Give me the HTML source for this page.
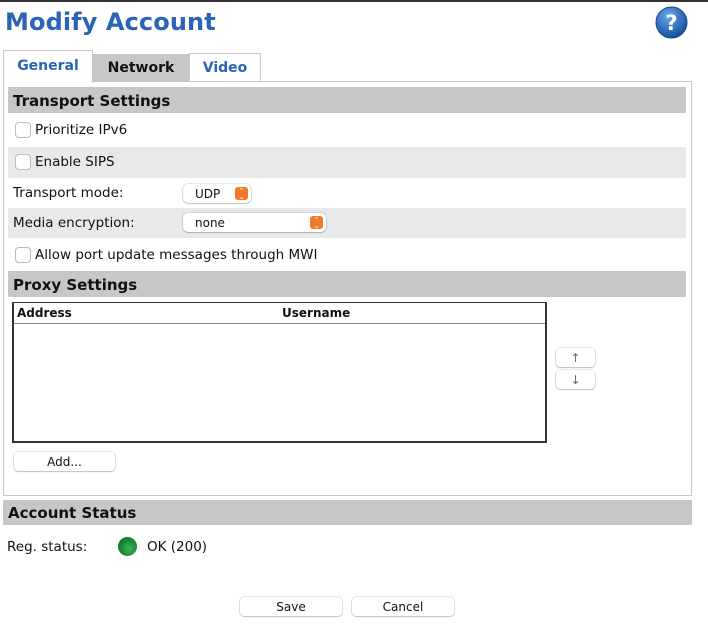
<!DOCTYPE html>
<html><head><meta charset="utf-8"><style>
*{box-sizing:border-box;margin:0;padding:0}
body{width:708px;height:630px;background:#fff;position:relative;overflow:hidden;font-family:"DejaVu Sans","Liberation Sans",sans-serif;font-size:13px;color:#111}
.a{position:absolute}
.hdr{position:absolute;background:#c6c7c8;font-weight:bold;font-size:15px;padding-left:5px;line-height:28px}
.row{position:absolute;left:8px;width:678px;line-height:31px;font-size:13.5px}
.g{background:#e9e9e9}
.cb{position:absolute;width:16px;height:16px;border:1px solid #bbb;border-radius:4px;background:#fff;top:7px;left:7px}
.btn{position:absolute;background:#fff;border-radius:4px;box-shadow:0 0.5px 1.5px rgba(0,0,0,.35),0 0 0 .5px rgba(0,0,0,.12);font-size:12px;text-align:center;line-height:20px;height:19px}
.sel{position:absolute;background:#fff;border-radius:5px;box-shadow:0 0.5px 1.5px rgba(0,0,0,.35),0 0 0 .5px rgba(0,0,0,.12);height:19px;font-size:12px;line-height:20px;padding-left:12px}
.ar{position:absolute;right:3px;top:3px;width:13px;height:13px;background:#f07a2a;border-radius:3px;color:#fff;font-size:7px;line-height:6px;text-align:center;padding-top:1px}
</style></head><body>
<div class="a" style="left:0;top:0;width:708px;height:2px;background:#333"></div>
<div class="a" style="left:5px;top:8px;font-size:24px;font-weight:bold;color:#2b63b7;letter-spacing:0.1px">Modify Account</div>
<svg class="a" style="left:655px;top:6px" width="33" height="33" viewBox="0 0 33 33"><defs><radialGradient id="h" cx="40%" cy="30%" r="70%"><stop offset="0" stop-color="#6aa6e6"/><stop offset="1" stop-color="#1450a0"/></radialGradient></defs><circle cx="16.5" cy="16.5" r="15.5" fill="url(#h)" stroke="#134a90"/><text x="16.5" y="24" text-anchor="middle" font-family="DejaVu Sans" font-weight="bold" font-size="21" fill="#fff">?</text></svg>
<div class="a" style="left:93px;top:54px;width:96px;height:28px;background:#c6c7c8;font-weight:bold;font-size:14px;text-align:center;line-height:29px">Network</div>
<div class="a" style="left:189px;top:53px;width:72px;height:29px;border:1px solid #c8c8c8;border-bottom:none;color:#2b63b7;font-weight:bold;font-size:14px;text-align:center;line-height:29px">Video</div>
<div class="a" style="left:3px;top:81px;width:689px;height:415px;border:1px solid #c8c8c8"></div>
<div class="a" style="left:3px;top:50px;width:90px;height:33px;border:1px solid #c8c8c8;border-bottom:none;background:#fff;color:#2b63b7;font-weight:bold;font-size:14px;text-align:center;line-height:30px">General</div>
<div class="hdr" style="left:8px;top:87px;width:678px;height:26px">Transport Settings</div>
<div class="row" style="top:115px"><div class="cb"></div><span style="padding-left:27px">Prioritize IPv6</span></div>
<div class="row g" style="top:147px;height:31px"><div class="cb"></div><span style="padding-left:27px">Enable SIPS</span></div>
<div class="row" style="top:178px;padding-left:5px">Transport mode:</div>
<div class="sel" style="left:183px;top:184px;width:68px">UDP<div class="ar">⌃<br>⌄</div></div>
<div class="row g" style="top:208px;height:30px;padding-left:5px">Media encryption:</div>
<div class="sel" style="left:183px;top:213px;width:143px">none<div class="ar">⌃<br>⌄</div></div>
<div class="row" style="top:240px"><div class="cb"></div><span style="padding-left:27px">Allow port update messages through MWI</span></div>
<div class="hdr" style="left:8px;top:271px;width:678px;height:26px">Proxy Settings</div>
<div class="a" style="left:12px;top:302px;width:535px;height:141px;border:2px solid #333;border-top-width:1.5px"></div>
<div class="a" style="left:14px;top:323px;width:531px;height:1px;background:#888"></div>
<div class="a" style="left:17px;top:306px;font-weight:bold;font-size:12px">Address</div>
<div class="a" style="left:282px;top:306px;font-weight:bold;font-size:12px">Username</div>
<div class="btn" style="left:556px;top:348px;width:39px;color:#666">↑</div>
<div class="btn" style="left:556px;top:370px;width:39px;color:#666">↓</div>
<div class="btn" style="left:14px;top:452px;width:101px">Add...</div>
<div class="hdr" style="left:3px;top:500px;width:689px;height:25px;line-height:26px">Account Status</div>
<div class="a" style="left:7px;top:539px;font-size:13.5px">Reg. status:</div>
<svg class="a" style="left:117px;top:536px" width="21" height="21"><defs><radialGradient id="gd" cx="60%" cy="60%" r="60%"><stop offset="0" stop-color="#3fb55a"/><stop offset="1" stop-color="#0a7a2a"/></radialGradient></defs><circle cx="10.5" cy="10.5" r="9.5" fill="url(#gd)"/></svg>
<div class="a" style="left:147px;top:539px;font-size:13.5px">OK (200)</div>
<div class="btn" style="left:240px;top:597px;width:102px">Save</div>
<div class="btn" style="left:352px;top:597px;width:102px">Cancel</div>
</body></html>
